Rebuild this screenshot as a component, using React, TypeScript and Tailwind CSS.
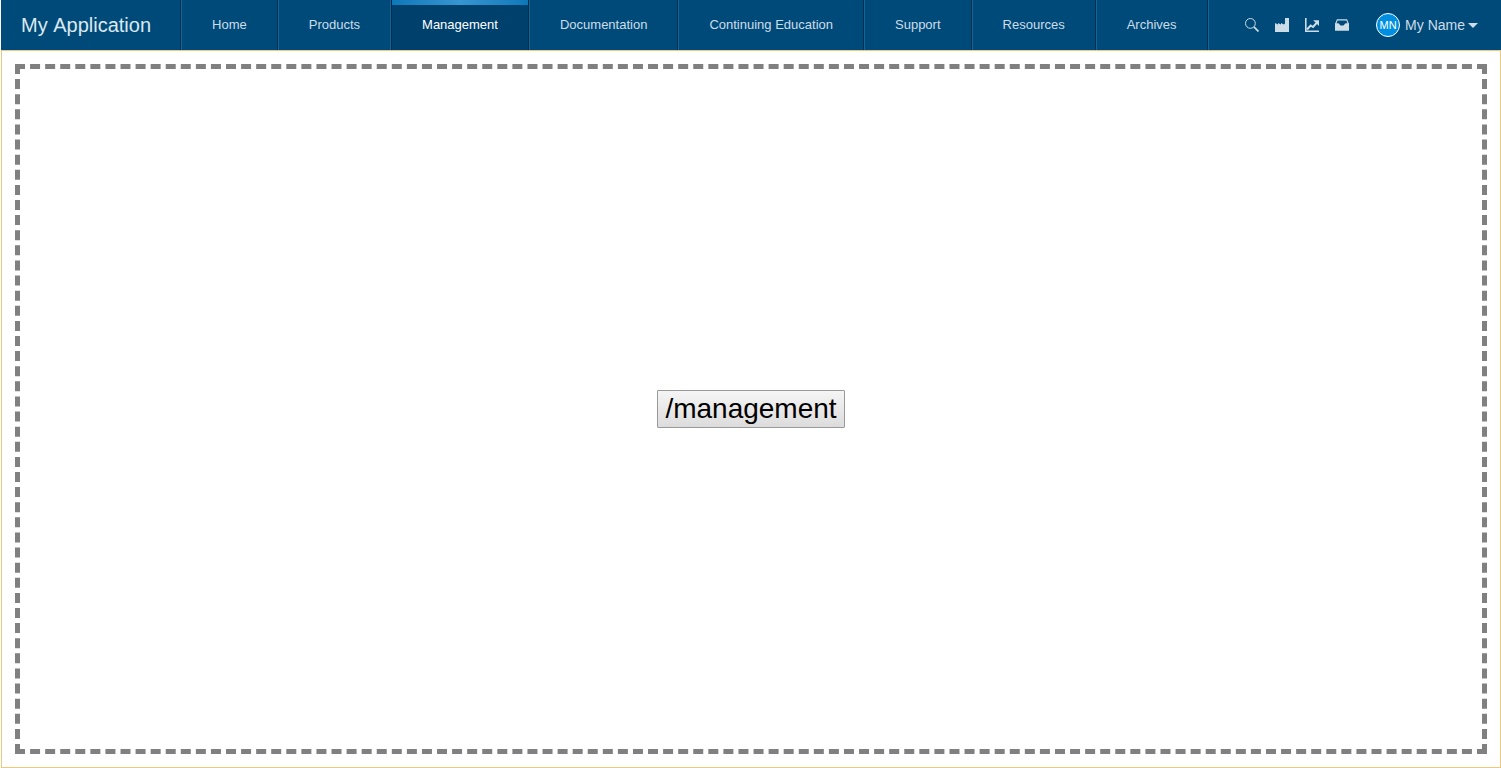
import type { ReactNode } from 'react';

const items = [
  'Home',
  'Products',
  'Management',
  'Documentation',
  'Continuing Education',
  'Support',
  'Resources',
  'Archives',
];

const active = 'Management';

function IconButton({ label, children }: { label: string; children: ReactNode }) {
  return (
    <button type="button" aria-label={label} className="flex w-[30px] items-center justify-center text-[#ccdde8]">
      <svg width="14" height="14" viewBox="0 0 14 14" fill="currentColor" aria-hidden="true">
        {children}
      </svg>
    </button>
  );
}

export default function App() {
  return (
    <div
      className="flex min-h-screen flex-col bg-white pl-px"
      style={{ fontFamily: '"Liberation Sans", Arial, sans-serif' }}
    >
      <header className="flex h-[50px] items-stretch bg-[#004a7a] text-[#ccdde8]">
        <h1 className="flex shrink-0 items-center pr-[29px] pl-5 text-xl leading-6 text-[#dbe8f0] [font-kerning:none]">
          My Application
        </h1>
        <nav className="flex border-l border-l-[#002f4f]">
          {items.map((item, index) =>
            item === active ? (
              <a
                key={item}
                href="#"
                aria-current="page"
                className="flex flex-col border-r border-l border-[#002c4d] bg-[#00406c] text-[13px] leading-4 text-white"
              >
                <span className="h-[5px] bg-linear-to-r from-[#0c78b9] from-0% via-[#3795d1] via-50% to-[#0c78b9] to-100%" />
                <span className="flex flex-1 items-center px-[30px] pb-[5px] whitespace-nowrap">{item}</span>
              </a>
            ) : (
              <a
                key={item}
                href="#"
                className={`flex items-center border-r border-l border-l-[#116697] px-[30px] text-[13px] leading-4 whitespace-nowrap ${
                  items[index + 1] === active ? 'border-r-[#116697]' : 'border-r-[#002f4f]'
                }`}
              >
                {item}
              </a>
            ),
          )}
          <span className="w-px bg-[#116697]" />
        </nav>
        <div className="ml-auto flex shrink-0 items-stretch pr-[23px]">
          <IconButton label="Search">
            <circle cx="5.4" cy="5.4" r="4.9" fill="none" stroke="currentColor" strokeWidth="1" />
            <path d="M8.900 8.900L13.500 13.500" stroke="currentColor" strokeWidth="1.700" />
          </IconButton>
          <IconButton label="Production">
            <path d="M0 14V5L3 6.500V5L6 6.500V5L9 6.500L10 5.500V0h4v14z" />
          </IconButton>
          <IconButton label="Analytics">
            <path d="M0 0h1.600v12.400H14V14H0z" />
            <path d="M2 11.500L5.700 7.500L8 9L12 4.500" fill="none" stroke="currentColor" strokeWidth="2" />
            <path d="M8.200 2.200H14V8z" />
          </IconButton>
          <IconButton label="Inbox">
            <path d="M.6 6L2.300 1.900h9.400L13.400 6" fill="none" stroke="currentColor" strokeWidth="1.100" />
            <path d="M0 5.200h3.500L5.500 7.500h3L10.500 5.200H14v7.500H0z" />
          </IconButton>
          <button type="button" className="ml-[19px] flex items-center text-sm leading-4">
            <span className="mr-[5px] flex size-6 items-center justify-center rounded-full border border-white bg-[#008fe0] text-[11px] text-white">
              MN
            </span>
            My Name
            <svg className="ml-[3px]" width="10" height="5" viewBox="0 0 10 5" fill="currentColor" aria-hidden="true">
              <path d="M0 0h10L5 5z" />
            </svg>
          </button>
        </div>
      </header>
      <main className="flex flex-1 border border-[#f0c77d] p-[13px]">
        <div className="flex flex-1 items-center justify-center border-[5px] border-dashed border-[#808080]">
          <button
            type="button"
            className="rounded-[1px] border border-[#999] bg-linear-to-b from-[#f5f5f5] to-[#dcdcdc] px-[7px] py-0.5 text-[28px] leading-8 text-black"
          >
            /management
          </button>
        </div>
      </main>
    </div>
  );
}
